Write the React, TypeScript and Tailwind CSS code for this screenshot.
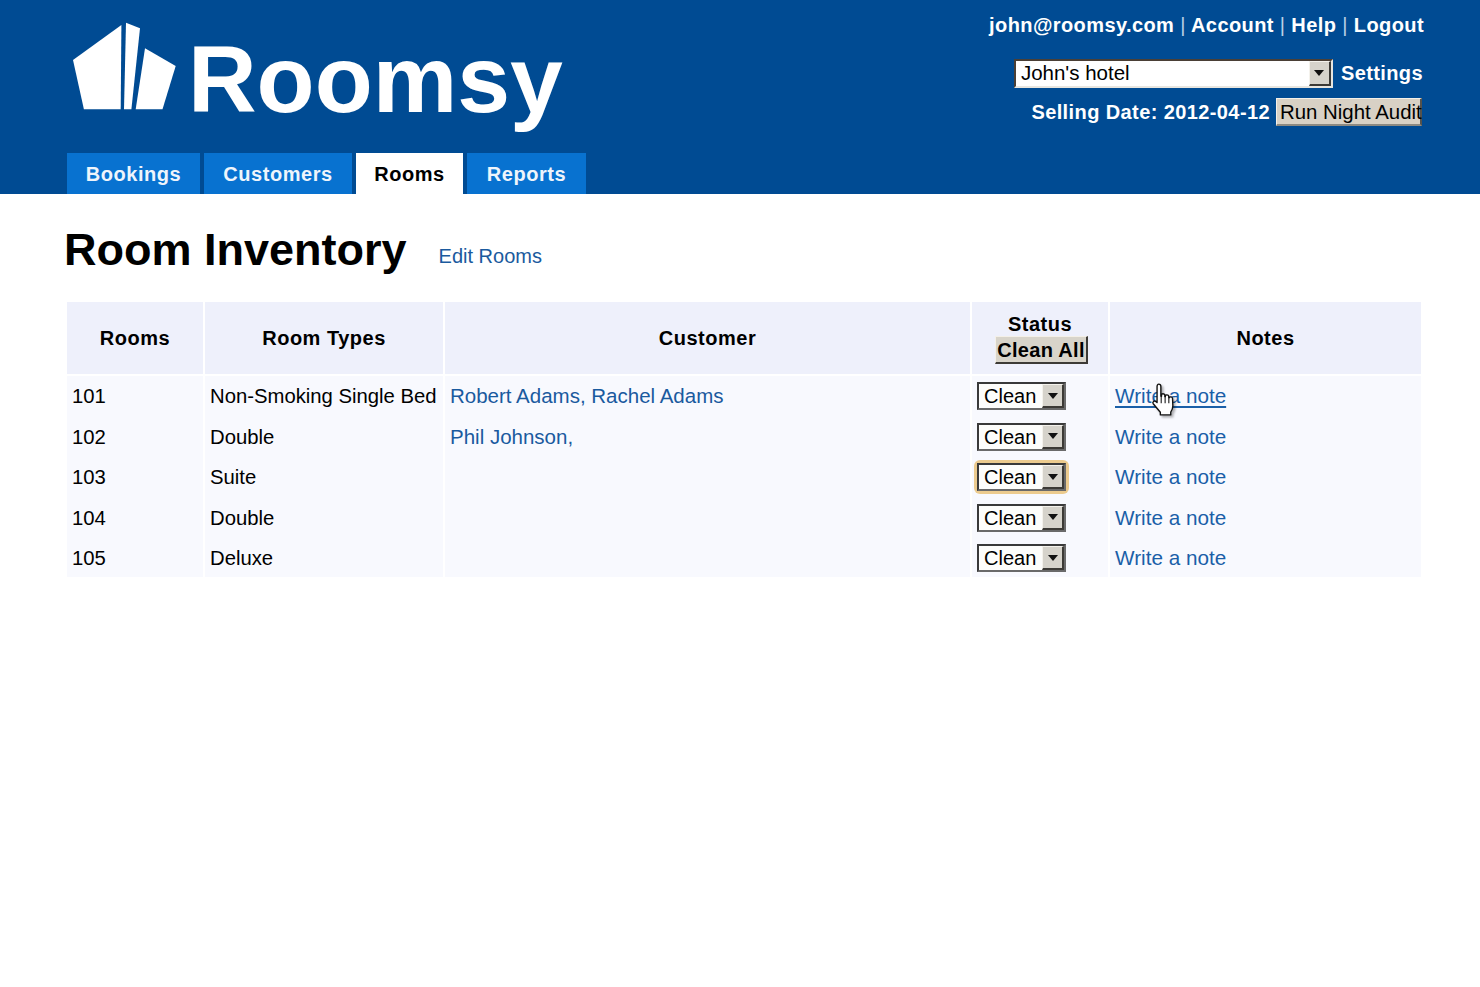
import React from 'react';

const ROOMS = [
  { number: '101', type: 'Non-Smoking Single Bed', customer: 'Robert Adams, Rachel Adams' },
  { number: '102', type: 'Double', customer: 'Phil Johnson,' },
  { number: '103', type: 'Suite', customer: '', focused: true },
  { number: '104', type: 'Double', customer: '' },
  { number: '105', type: 'Deluxe', customer: '' },
];

const TABS = [
  { label: 'Bookings', width: 'w-[133px]' },
  { label: 'Customers', width: 'w-[148px]' },
  { label: 'Rooms', width: 'w-[107px]', active: true },
  { label: 'Reports', width: 'w-[119px]' },
];

function Arrow({ className }: { className: string }) {
  return (
    <span className={`flex shrink-0 items-center justify-center border-t border-l border-t-[#f4f2ec] border-l-[#f4f2ec] border-r-2 border-b-2 border-r-[#3c3a36] border-b-[#3c3a36] bg-[#d6d3cb] ${className}`}>
      <svg width="10" height="6" viewBox="0 0 10 6">
        <path d="M0 0h10L5 6z" fill="#111" />
      </svg>
    </span>
  );
}

function StatusSelect({ focused }: { focused?: boolean }) {
  return (
    <div className={`inline-flex rounded-[3px] align-middle ${focused ? 'shadow-[0_0_0_3px_#eccb8e]' : ''}`}>
      <div className="flex h-[28px] w-[89px] border-2 border-t-[#3a3a3a] border-l-[#3a3a3a] border-r-[#6a6a6a] border-b-[#6a6a6a] bg-[#fdfdfb]">
        <span className="flex-1 pl-[5px] text-[20px] leading-[24px] text-black">Clean</span>
        <Arrow className="w-[22px]" />
      </div>
    </div>
  );
}

function HandCursor() {
  return (
    <svg
      className="pointer-events-none absolute left-[35px] top-[2px] drop-shadow-[2px_2px_1px_rgba(0,0,0,0.3)]"
      width="26"
      height="35"
      viewBox="0 0 24 33"
    >
      <path
        d="M8 2c1.300 0 2 1 2 2.200v9.300l.6-.1V12c0-1.100 2.700-1.300 3.100.2v1.500l.5.100V13c.3-1.300 2.900-1.200 3.200.4v1.300l.5.100c.4-1.200 2.800-1.100 3.100.700l.3 7c0 2.500-1 4.500-2 6V31H9.500v-2.500L2.800 20.500c-1.200-1.600 1-3.500 2.700-2l.9.800V4.200C6.400 3 7 2 8 2z"
        fill="#fff"
        stroke="#111"
        strokeWidth="1.300"
        strokeLinejoin="round"
      />
      <path d="M10.300 14v6M14 14v6M17.500 15v5" stroke="#111" strokeWidth="1" fill="none" />
    </svg>
  );
}

function Logo() {
  return (
    <div className="flex h-[153px] items-start">
      <svg className="mt-[22px] ml-[5px] shrink-0" width="106" height="88" viewBox="72 22 106 88">
        <path d="M73 60 121.400 25 120.700 109.300H83.900z" fill="#fff" />
        <path d="M126 22.700 140 28.300 131.400 109.300H124z" fill="#fff" />
        <path d="M145 48.300 175.700 66 162.500 109.300H135.700z" fill="#fff" />
      </svg>
      <span className="ml-[10px] mt-[25px] text-[95px] font-bold leading-[108px] text-white">Roomsy</span>
    </div>
  );
}

export default function App() {
  return (
    <div className="min-h-[987px] bg-white font-['Liberation_Sans',Arial,sans-serif]">
      {/* top bar */}
      <header className="flex h-[194px] justify-between bg-[#004b93] pl-[67px] pr-[56px]">
        <div>
          <Logo />
          <nav className="flex gap-[4px]">
            {TABS.map((tab) => (
              <a
                key={tab.label}
                className={`flex h-[41px] items-center justify-center text-[20px] font-bold tracking-[0.55px] ${tab.width} ${
                  tab.active ? 'bg-white text-black' : 'bg-[#0872d0] text-[#eef5fc]'
                }`}
              >
                {tab.label}
              </a>
            ))}
          </nav>
        </div>

        <div className="flex flex-col items-end text-[20px] font-bold tracking-[0.4px] text-white">
          <div className="mt-[13px] h-[24px] leading-[24px]">
            john@roomsy.com <span className="font-normal text-[#b9cfe6]">|</span> Account{' '}
            <span className="font-normal text-[#b9cfe6]">|</span> Help{' '}
            <span className="font-normal text-[#b9cfe6]">|</span> Logout
          </div>
          <div className="mt-[21px] flex items-center gap-[8px]">
            <div className="flex h-[29px] w-[319px] border-2 border-t-[#4a3f36] border-l-[#4a3f36] border-r-[#e8e6e0] border-b-[#e8e6e0] bg-white">
              <span className="flex-1 pl-[5px] text-[20.500px] font-normal leading-[23px] tracking-normal text-black">John's hotel</span>
              <Arrow className="w-[22px]" />
            </div>
            <span className="mr-[1px]">Settings</span>
          </div>
          <div className="mt-[9px] flex items-center gap-[6px] pr-[2px]">
            <span>Selling Date: 2012-04-12</span>
            <button className="h-[28px] w-[146px] whitespace-nowrap border-t border-l border-t-[#f4f0e8] border-l-[#f4f0e8] border-r-2 border-b-2 border-r-[#55524c] border-b-[#8d8a82] bg-[#d8d1c5] pl-[3px] text-left text-[20.400px] font-normal leading-[24px] tracking-normal text-black">
              Run Night Audit
            </button>
          </div>
        </div>
      </header>

      <main className="pl-[65px]">
        <div className="flex h-[106px] items-start">
          <h1 className="-ml-[1px] mt-[29px] text-[45px] font-bold leading-[54px] text-black">Room Inventory</h1>
          <a className="ml-[32px] mt-[50px] text-[20px] leading-[24px] text-[#1a5a9e]">Edit Rooms</a>
        </div>

        <table className="w-[1358px] table-fixed border-separate border-spacing-[2px] text-[20.300px] text-black">
          <colgroup>
            <col className="w-[136px]" />
            <col className="w-[238px]" />
            <col className="w-[525px]" />
            <col className="w-[136px]" />
            <col />
          </colgroup>
          <thead>
            <tr className="h-[72px] bg-[#eef0fb] text-center text-[20px] font-bold tracking-[0.5px]">
              <th>Rooms</th>
              <th>Room Types</th>
              <th>Customer</th>
              <th className="font-bold">
                <div className="leading-[24px]">Status</div>
                <button className="ml-[23px] block h-[28px] w-[93px] border-t border-l border-t-[#f4f0e8] border-l-[#f4f0e8] border-r-2 border-b-2 border-r-[#3c3a36] border-b-[#3c3a36] bg-[#d8d4ca] font-bold leading-[24px] tracking-[0.3px]">
                  Clean All
                </button>
              </th>
              <th>Notes</th>
            </tr>
          </thead>
          <tbody>
            {ROOMS.map((room, i) => {
              const cell = `bg-[#f8f9fe] pl-[5px] ${i < 4 ? 'shadow-[0_2px_0_#f8f9fe]' : ''}`;
              return (
                <tr key={room.number} className="h-[38.600px]">
                  <td className={`${cell} pt-[2px]`}>{room.number}</td>
                  <td className={`${cell} whitespace-nowrap pt-[2px]`}>{room.type}</td>
                  <td className={`${cell} pt-[2px] text-[20.500px] text-[#1a5a9e]`}>{room.customer}</td>
                  <td className={`${cell} pb-[1px]`}>
                    <StatusSelect focused={room.focused} />
                  </td>
                  <td className={`${cell} pt-[1px]`}>
                    <a className={`relative inline-block text-[20.700px] text-[#1a5fa8] ${i === 0 ? 'underline underline-offset-[3px]' : ''}`}>
                      Write a note
                      {i === 0 && <HandCursor />}
                    </a>
                  </td>
                </tr>
              );
            })}
          </tbody>
        </table>
      </main>
    </div>
  );
}
